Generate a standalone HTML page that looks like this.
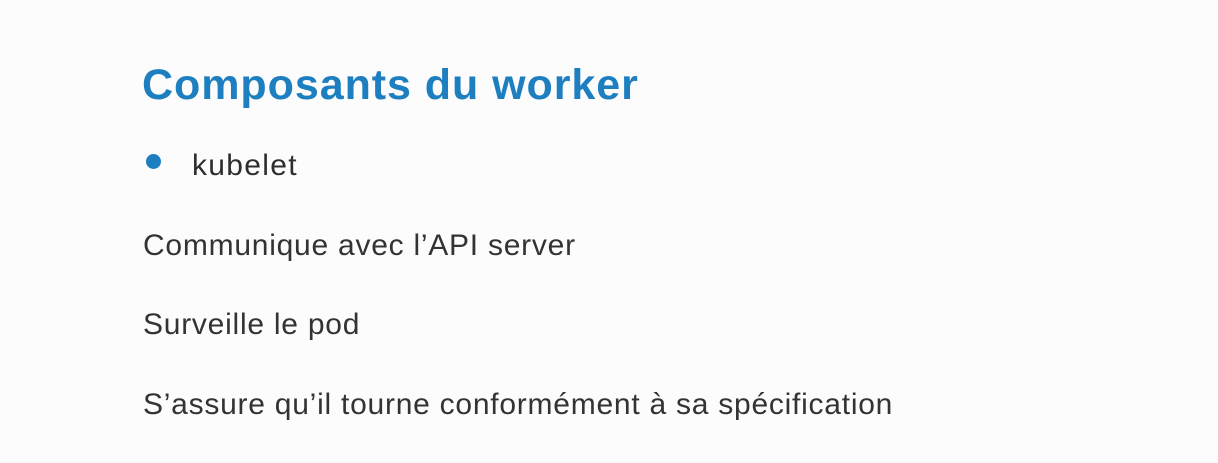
<!DOCTYPE html>
<html><head><style>
html,body{margin:0;padding:0;}
body{width:1218px;height:463px;background:#fcfcfc;position:relative;overflow:hidden;font-family:"Liberation Sans",sans-serif;}
.t{position:absolute;white-space:nowrap;line-height:1;}
h1{position:absolute;margin:0;left:142px;top:64px;font-size:43px;font-weight:bold;color:#1d7fbf;line-height:1;white-space:nowrap;letter-spacing:0.95px;}
.b{position:absolute;left:146px;top:154px;width:15px;height:15px;border-radius:50%;background:#1d7fbf;}
.k{left:192px;top:151px;font-size:30px;color:#2e2e2e;letter-spacing:1.3px;}
.l{left:143px;font-size:30px;color:#333;letter-spacing:0.75px;}
</style></head><body>
<h1>Composants du worker</h1>
<div class="b"></div>
<div class="t k">kubelet</div>
<div class="t l" style="top:231px">Communique avec l’API server</div>
<div class="t l" style="top:310px">Surveille le pod</div>
<div class="t l" style="top:390px">S’assure qu’il tourne conformément à sa spécification</div>
</body></html>
